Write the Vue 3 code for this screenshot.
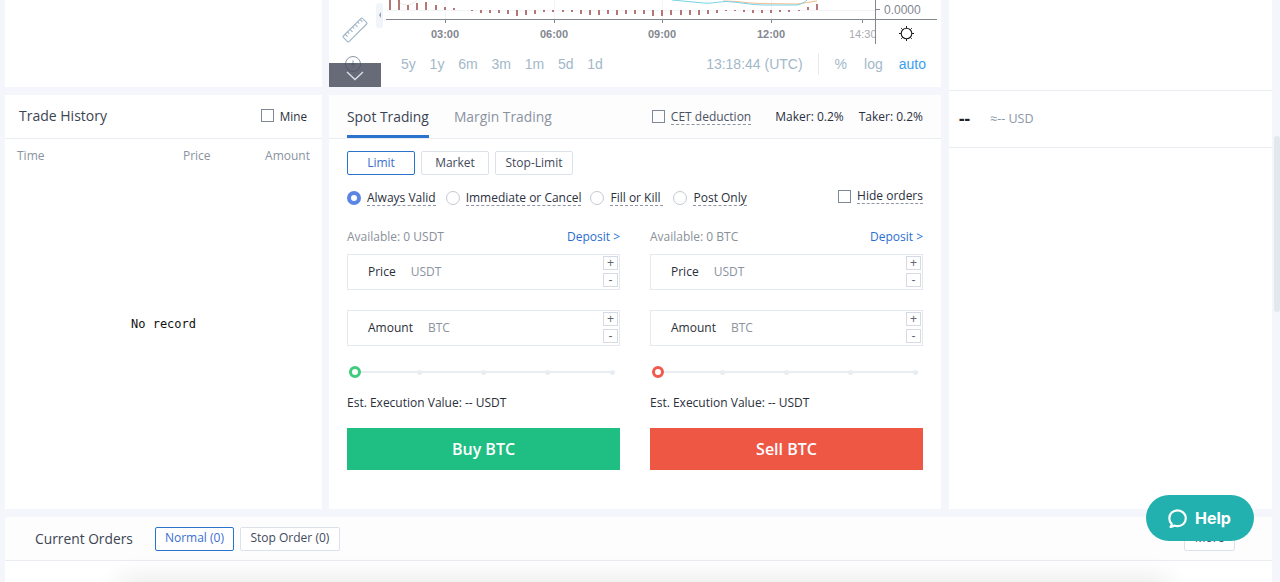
<script setup>
const ranges = ['5y', '1y', '6m', '3m', '1m', '5d', '1d']
const orderTypes = ['Limit', 'Market', 'Stop-Limit']
const validity = ['Always Valid', 'Immediate or Cancel', 'Fill or Kill', 'Post Only']
const hours = [
  { label: '03:00', x: 116 },
  { label: '06:00', x: 225 },
  { label: '09:00', x: 333 },
  { label: '12:00', x: 442 }
]
// volume bars as [x, top, height]; the baseline sits at y = 10
const bars = [
  [60, 0, 10], [69, 0, 10], [78, 5, 5], [87, 3, 7], [96, 2, 8], [106, 5, 5], [115, 7, 3], [124, 8, 2],
  [142, 10, 1], [151, 10, 3], [160, 10, 3], [169, 10, 3], [178, 10, 4], [187, 10, 6], [196, 10, 5], [205, 10, 4],
  [214, 10, 2], [223, 10, 2], [233, 10, 2], [242, 10, 2], [251, 10, 4], [260, 10, 5], [269, 10, 5], [278, 10, 4],
  [287, 10, 5], [296, 10, 4], [305, 10, 4], [314, 10, 4], [323, 10, 6], [332, 10, 6], [341, 10, 5], [351, 10, 5],
  [360, 10, 5], [369, 10, 5], [378, 10, 4], [387, 10, 3], [396, 10, 1], [405, 10, 1], [414, 10, 2], [423, 10, 3],
  [432, 10, 3], [441, 10, 3], [450, 10, 2], [459, 10, 2], [469, 10, 1], [478, 7, 3], [487, 4, 6]
]

const forms = [
  { coin: 'USDT', action: 'Buy BTC', side: 'buy' },
  { coin: 'BTC', action: 'Sell BTC', side: 'sell' }
]
</script>

<template>
  <div class="page">
    <div class="columns">
      <div class="left-col">
        <div class="panel left-top"></div>
        <div class="panel history">
          <div class="history-head">
            <span class="history-title">Trade History</span>
            <label class="mine"><i class="check"></i>Mine</label>
          </div>
          <div class="history-cols">
            <span>Time</span>
            <span class="col-price">Price</span>
            <span>Amount</span>
          </div>
          <div class="no-record">No record</div>
        </div>
      </div>

      <div class="mid-col">
        <div class="panel chart">
          <svg class="plot" width="612" height="46" viewBox="0 0 612 46">
            <path d="M116.500 0V19M225.500 0V19M333.500 0V19M442.500 0V19" stroke="#f3f4f7" fill="none" />
            <path d="M57 10.500H546" stroke="#f3f4f7" fill="none" />
            <circle cx="78" cy="-8" r="13" fill="none" stroke="#ececec" />
            <path d="M394 1C410 1 420 3.500 434 3.500L468 4L488 1" stroke="#f5bd90" fill="none" />
            <path d="M343 0L378 3.300C385 3 392 1.500 398 1.500C410 2 422 5 434 5L468 5C472 4.500 476 2 478 0" stroke="#78d3e8" fill="none" />
            <rect
              v-for="bar in bars"
              :key="bar[0]"
              :x="bar[0]"
              :y="bar[1]"
              width="2"
              :height="bar[2]"
              fill="#b57676"
            />
            <path d="M57 19.500H608" stroke="#83878f" fill="none" />
            <path d="M546.500 0V44M546 9.500H551" stroke="#83878f" fill="none" />
            <path d="M116.500 19V23M225.500 19V23M333.500 19V23M442.500 19V23M533.500 19V23" stroke="#83878f" fill="none" />
            <text x="555" y="14" class="axis-value">0.0000</text>
            <text v-for="h in hours" :key="h.label" :x="h.x" y="38" text-anchor="middle" class="axis-hour">{{ h.label }}</text>
            <text x="520" y="38" class="axis-end">14:30</text>
            <rect x="546" y="28" width="20" height="14" fill="#fff" />
            <rect x="546" y="28" width="1" height="16" fill="#83878f" />
            <circle cx="577.500" cy="33.500" r="5.300" fill="none" stroke="#1c1c1c" stroke-width="1.100" />
            <path d="M577.500 26V28M577.500 39V41M570 33.500H572M583 33.500H585M572.200 28.200L573.500 29.500M581.500 37.500L582.800 38.800M582.800 28.200L581.500 29.500M573.500 37.500L572.200 38.800" stroke="#1c1c1c" fill="none" />
            <rect x="47" y="3" width="7" height="25" rx="3" fill="#f1f5fa" />
            <path d="M52 12L50 15L52 18Z" fill="#8ca0b3" />
          </svg>
          <svg class="ruler" width="28" height="28" viewBox="0 0 28 28">
            <g transform="rotate(-45 14 14)" fill="none" stroke="#9fb6c9" stroke-width="1.100">
              <rect x="0.500" y="10" width="27" height="8" rx="1" />
              <path d="M4 10V13.500M7.500 10V12.500M11 10V13.500M14.500 10V12.500M18 10V13.500M21.500 10V12.500M25 10V13.500" />
            </g>
          </svg>
          <svg class="zoom-in" width="18" height="18" viewBox="0 0 18 18">
            <circle cx="9" cy="9" r="7.500" fill="none" stroke="#8a97a6" />
            <path d="M5.500 9H12.500M9 5.500V12.500" stroke="#8a97a6" fill="none" />
          </svg>
          <div class="collapse">
            <svg width="20" height="10" viewBox="0 0 20 10">
              <path d="M2 1L10 8.500L18 1" stroke="#dfe2e8" stroke-width="1.300" fill="none" />
            </svg>
          </div>
          <div class="range-bar">
            <div class="ranges">
              <span v-for="r in ranges" :key="r">{{ r }}</span>
            </div>
            <div class="range-right">
              <span class="clock">13:18:44 (UTC)</span>
              <i class="range-sep"></i>
              <span class="pct">%</span>
              <span class="log">log</span>
              <span class="auto">auto</span>
            </div>
          </div>
        </div>

        <div class="panel trade">
          <div class="trade-head">
            <div class="tabs">
              <span class="tab active">Spot Trading</span>
              <span class="tab">Margin Trading</span>
            </div>
            <div class="fees">
              <label class="cet"><i class="check"></i><span class="dashed">CET deduction</span></label>
              <span class="fee">Maker: 0.2%</span>
              <span class="fee">Taker: 0.2%</span>
            </div>
          </div>
          <div class="trade-body">
            <div class="type-row">
              <button v-for="(t, i) in orderTypes" :key="t" class="btn" :class="{ selected: i === 0 }">{{ t }}</button>
            </div>
            <div class="valid-row">
              <label v-for="(v, i) in validity" :key="v" class="radio-item">
                <i class="radio" :class="{ on: i === 0 }"></i><span class="dashed">{{ v }}</span>
              </label>
              <label class="hide-orders"><i class="check"></i><span class="dashed">Hide orders</span></label>
            </div>
            <div class="forms">
              <div v-for="f in forms" :key="f.side" class="form" :class="f.side">
                <div class="avail">
                  <span>Available: 0 {{ f.coin }}</span>
                  <span class="deposit">Deposit &gt;</span>
                </div>
                <div class="field">
                  <span class="field-label">Price</span>
                  <span class="field-unit">USDT</span>
                  <div class="steppers"><i>+</i><i>-</i></div>
                </div>
                <div class="field">
                  <span class="field-label">Amount</span>
                  <span class="field-unit">BTC</span>
                  <div class="steppers"><i>+</i><i>-</i></div>
                </div>
                <div class="slider">
                  <i class="knob"></i>
                  <i class="dot" v-for="n in 4" :key="n"></i>
                </div>
                <div class="est">Est. Execution Value: -- USDT</div>
                <button class="submit">{{ f.action }}</button>
              </div>
            </div>
          </div>
        </div>
      </div>

      <div class="panel right-col">
        <div class="right-info">
          <span class="right-dash">--</span>
          <span class="right-usd">≈-- USD</span>
        </div>
      </div>
    </div>

    <div class="panel orders">
      <div class="orders-head">
        <span class="orders-title">Current Orders</span>
        <button class="btn selected normal">Normal (0)</button>
        <button class="btn stop">Stop Order (0)</button>
        <button class="btn more">More</button>
      </div>
      <div class="orders-glow"></div>
    </div>

    <div class="help">
      <svg width="21" height="21" viewBox="0 0 21 21">
        <path d="M3.500 19C5 18.800 6.300 18.300 7.200 17.600C8.200 18 9.300 18.200 10.500 18.200C15 18.200 18.800 15 18.800 10.300C18.800 5.700 15 2.300 10.500 2.300C6 2.300 2.300 5.700 2.300 10.300C2.300 12.600 3.200 14.500 4.700 15.900C4.700 17 4.300 18.100 3.500 19Z" fill="none" stroke="#fff" stroke-width="2.200" stroke-linejoin="round" />
      </svg>
      <span>Help</span>
    </div>
    <div class="scrollbar"><i></i></div>
  </div>
</template>

<style scoped>
.page {
  position: relative;
  width: 1280px;
  height: 582px;
  overflow: hidden;
  background: #f4f6fb;
  padding: 0 8px 0 5px;
  box-sizing: border-box;
  font-family: "Open Sans", "Noto Sans", sans-serif;
  font-size: 12px;
  color: #2f3542;
}
.panel {
  background: #fff;
}
.columns {
  display: flex;
  height: 509px;
}
.left-col {
  width: 317px;
  margin-right: 7px;
  display: flex;
  flex-direction: column;
  gap: 8px;
}
.left-top {
  height: 87px;
}
.history {
  flex: 1;
  display: flex;
  flex-direction: column;
}
.history-head {
  height: 41px;
  padding: 0 15px 2px 14px;
  display: flex;
  align-items: center;
  justify-content: space-between;
  border-bottom: 1px solid #e9edf2;
}
.history-title {
  font-size: 14px;
  color: #3b4452;
}
.mine {
  display: flex;
  align-items: center;
  gap: 6px;
  font-size: 11.7px;
  color: #2a2f3a;
}
.check {
  display: block;
  width: 11px;
  height: 11px;
  border: 1px solid #7f8896;
  flex: none;
}
.history-cols {
  display: flex;
  justify-content: space-between;
  padding: 8px 12px 0;
  color: #8a93a0;
}
.col-price {
  margin-left: 84px;
}
.no-record {
  flex: 1;
  display: flex;
  align-items: center;
  justify-content: center;
  padding-bottom: 25px;
  font-family: "DejaVu Sans Mono", "Liberation Mono", monospace;
  font-size: 12px;
  color: #111;
}
.mid-col {
  width: 612px;
  margin-right: 8px;
  display: flex;
  flex-direction: column;
  gap: 8px;
}
.chart {
  position: relative;
  height: 87px;
  overflow: hidden;
}
.plot {
  position: absolute;
  top: 0;
  left: 0;
}
.axis-value {
  font: 12px "Liberation Sans", sans-serif;
  fill: #83878f;
}
.axis-hour {
  font: bold 11px "Liberation Sans", sans-serif;
  fill: #83878f;
}
.axis-end {
  font: 11px "Liberation Sans", sans-serif;
  fill: #a8abb1;
}
.ruler {
  position: absolute;
  left: 12px;
  top: 16px;
}
.zoom-in {
  position: absolute;
  left: 15px;
  top: 55px;
}
.collapse {
  position: absolute;
  left: 0;
  top: 63px;
  width: 52px;
  height: 24px;
  background: rgba(70, 74, 90, 0.82);
  display: flex;
  justify-content: center;
  padding-top: 8px;
  box-sizing: border-box;
}
.range-bar {
  position: absolute;
  left: 72px;
  right: 15px;
  top: 53px;
  display: flex;
  justify-content: space-between;
  align-items: center;
  height: 22px;
  font-family: "Liberation Sans", sans-serif;
  font-size: 14px;
  color: #a3b8c9;
}
.ranges {
  display: flex;
  gap: 13.8px;
}
.range-right {
  display: flex;
  align-items: center;
}
.range-sep {
  display: block;
  width: 1px;
  height: 22px;
  background: #e8ecf0;
  margin: 0 16px 0 15px;
}
.log {
  margin-left: 17px;
}
.auto {
  margin-left: 16px;
  color: #3a9ff0;
}
.trade {
  flex: 1;
  display: flex;
  flex-direction: column;
}
.trade-head {
  height: 43px;
  padding: 0 18px;
  display: flex;
  justify-content: space-between;
  background: #fdfdfe;
  border-bottom: 1px solid #e9edf2;
}
.tabs {
  display: flex;
  gap: 25px;
}
.tab {
  font-size: 13.85px;
  color: #8b929e;
  line-height: 43px;
  height: 43px;
  box-sizing: border-box;
}
.tab.active {
  color: #3b4452;
  border-bottom: 3px solid #2a73cf;
}
.fees {
  display: flex;
  align-items: center;
  color: #2a3040;
}
.cet {
  display: flex;
  align-items: center;
  gap: 6px;
  margin-right: 24px;
  color: #4a5261;
}
.fee + .fee {
  margin-left: 15px;
}
.dashed {
  display: inline-block;
  border-bottom: 1px dashed #8d95a3;
  line-height: 15px;
}
.trade-body {
  padding: 12px 18px 0;
}
.type-row {
  display: flex;
  gap: 6px;
}
.btn {
  height: 24px;
  padding: 0 0 2px;
  background: #fff;
  border: 1px solid #dde1ea;
  border-radius: 2px;
  font: inherit;
  color: #414a5c;
  white-space: nowrap;
  box-sizing: border-box;
}
.btn.selected {
  border-color: #2a73cf;
  color: #3a6fcf;
}
.type-row .btn:first-child {
  width: 68px;
}
.type-row .btn:nth-child(2) {
  width: 68px;
}
.type-row .btn:nth-child(3) {
  width: 78px;
}
.valid-row {
  position: relative;
  display: flex;
  align-items: center;
  margin-top: 13px;
  height: 20px;
  color: #2a3040;
}
.radio-item {
  display: flex;
  align-items: center;
  gap: 6px;
  margin-right: 9px;
}
.radio-item:first-child {
  margin-right: 10px;
}
.radio-item:nth-child(3) {
  margin-right: 10px;
}
.radio-item:nth-child(3) .dashed {
  min-width: 53px;
}
.radio {
  display: block;
  width: 14px;
  height: 14px;
  box-sizing: border-box;
  border: 1px solid #c3c9d4;
  border-radius: 50%;
  flex: none;
}
.radio.on {
  background: #fff;
  border: 4px solid #5b86e5;
}
.hide-orders {
  margin-left: auto;
  display: flex;
  align-items: center;
  gap: 6px;
  position: relative;
  top: -2px;
}
.forms {
  display: flex;
  justify-content: space-between;
  margin-top: 20px;
}
.form {
  width: 273px;
}
.avail {
  display: flex;
  justify-content: space-between;
  color: #8a8f99;
  line-height: 17px;
}
.deposit {
  color: #2a6fd0;
}
.field {
  position: relative;
  height: 36px;
  margin-top: 9px;
  margin-bottom: 20px;
  border: 1px solid #e4e8ef;
  box-sizing: border-box;
  display: flex;
  align-items: center;
  padding: 0 0 2px 20px;
}
.field-label {
  color: #2a2f3a;
}
.field-unit {
  margin-left: 15px;
  color: #8a93a0;
}
.steppers {
  position: absolute;
  right: 1px;
  top: 1px;
  display: flex;
  flex-direction: column;
  gap: 3px;
}
.steppers i {
  display: block;
  width: 15px;
  height: 14px;
  box-sizing: border-box;
  border: 1px solid #d5dae3;
  font: 12px/12px "Liberation Sans", sans-serif;
  text-align: center;
  color: #5f6775;
}
.slider {
  display: flex;
  align-items: center;
  justify-content: space-between;
  height: 12px;
  margin: 0 5.500px;
  background: linear-gradient(#e9edf2, #e9edf2) center / 100% 2px no-repeat;
}
.knob {
  display: block;
  width: 12px;
  height: 12px;
  margin: 0 -3.500px;
  box-sizing: border-box;
  border-radius: 50%;
  background: #fff;
}
.buy .knob {
  border: 3px solid #3fcb7a;
}
.sell .knob {
  border: 3px solid #ef5a4c;
}
.dot {
  display: block;
  width: 5px;
  height: 5px;
  border-radius: 50%;
  background: #e9edf2;
}
.est {
  margin-top: 16px;
  line-height: 17px;
  color: #2a2f3a;
}
.submit {
  display: block;
  width: 100%;
  height: 42px;
  margin-top: 17px;
  border: 0;
  color: #fff;
  font: 600 16px "Open Sans", "Noto Sans", sans-serif;
}
.buy .submit {
  background: #1fbf84;
}
.sell .submit {
  background: #ef5745;
}
.right-col {
  width: 323px;
}
.right-info {
  margin-top: 90px;
  height: 54px;
  padding: 0 0 2px 10px;
  border-top: 1px solid #e9edf2;
  border-bottom: 1px solid #e9edf2;
  display: flex;
  align-items: center;
}
.right-dash {
  font-size: 17px;
  font-weight: 700;
  color: #222;
  width: 31px;
}
.right-usd {
  font-size: 12.500px;
  color: #8a97a6;
}
.orders {
  position: relative;
  margin-top: 8px;
  height: 65px;
  overflow: hidden;
}
.orders-head {
  height: 43px;
  display: flex;
  align-items: center;
  padding: 0 37px 0 30px;
  background: #fdfdfe;
  border-bottom: 1px solid #e9edf2;
}
.orders-title {
  font-size: 13.800px;
  color: #3b4452;
  margin-right: 22px;
}
.orders-head .normal {
  width: 79px;
  margin-right: 6px;
}
.orders-head .stop {
  width: 100px;
}
.orders-head .more {
  margin-left: auto;
  width: 51px;
  color: #3a4a7a;
}
.orders-glow {
  position: absolute;
  left: 120px;
  right: 110px;
  bottom: -16px;
  height: 14px;
  box-shadow: 0 0 26px 6px rgba(0, 0, 0, 0.09);
}
.help {
  position: absolute;
  left: 1146px;
  top: 495px;
  width: 108px;
  height: 46px;
  padding-right: 2px;
  box-sizing: border-box;
  border-radius: 23px;
  background: #22b1ae;
  display: flex;
  align-items: center;
  justify-content: center;
  gap: 7px;
  color: #fff;
  font: 700 16px Inter, "Liberation Sans", sans-serif;
}
.scrollbar {
  position: absolute;
  right: 0;
  top: 0;
  bottom: 0;
  width: 8px;
}
.scrollbar i {
  position: absolute;
  left: 2px;
  right: 0;
  top: 136px;
  height: 176px;
  background: #e3e7ee;
  border-radius: 3px;
}
</style>
